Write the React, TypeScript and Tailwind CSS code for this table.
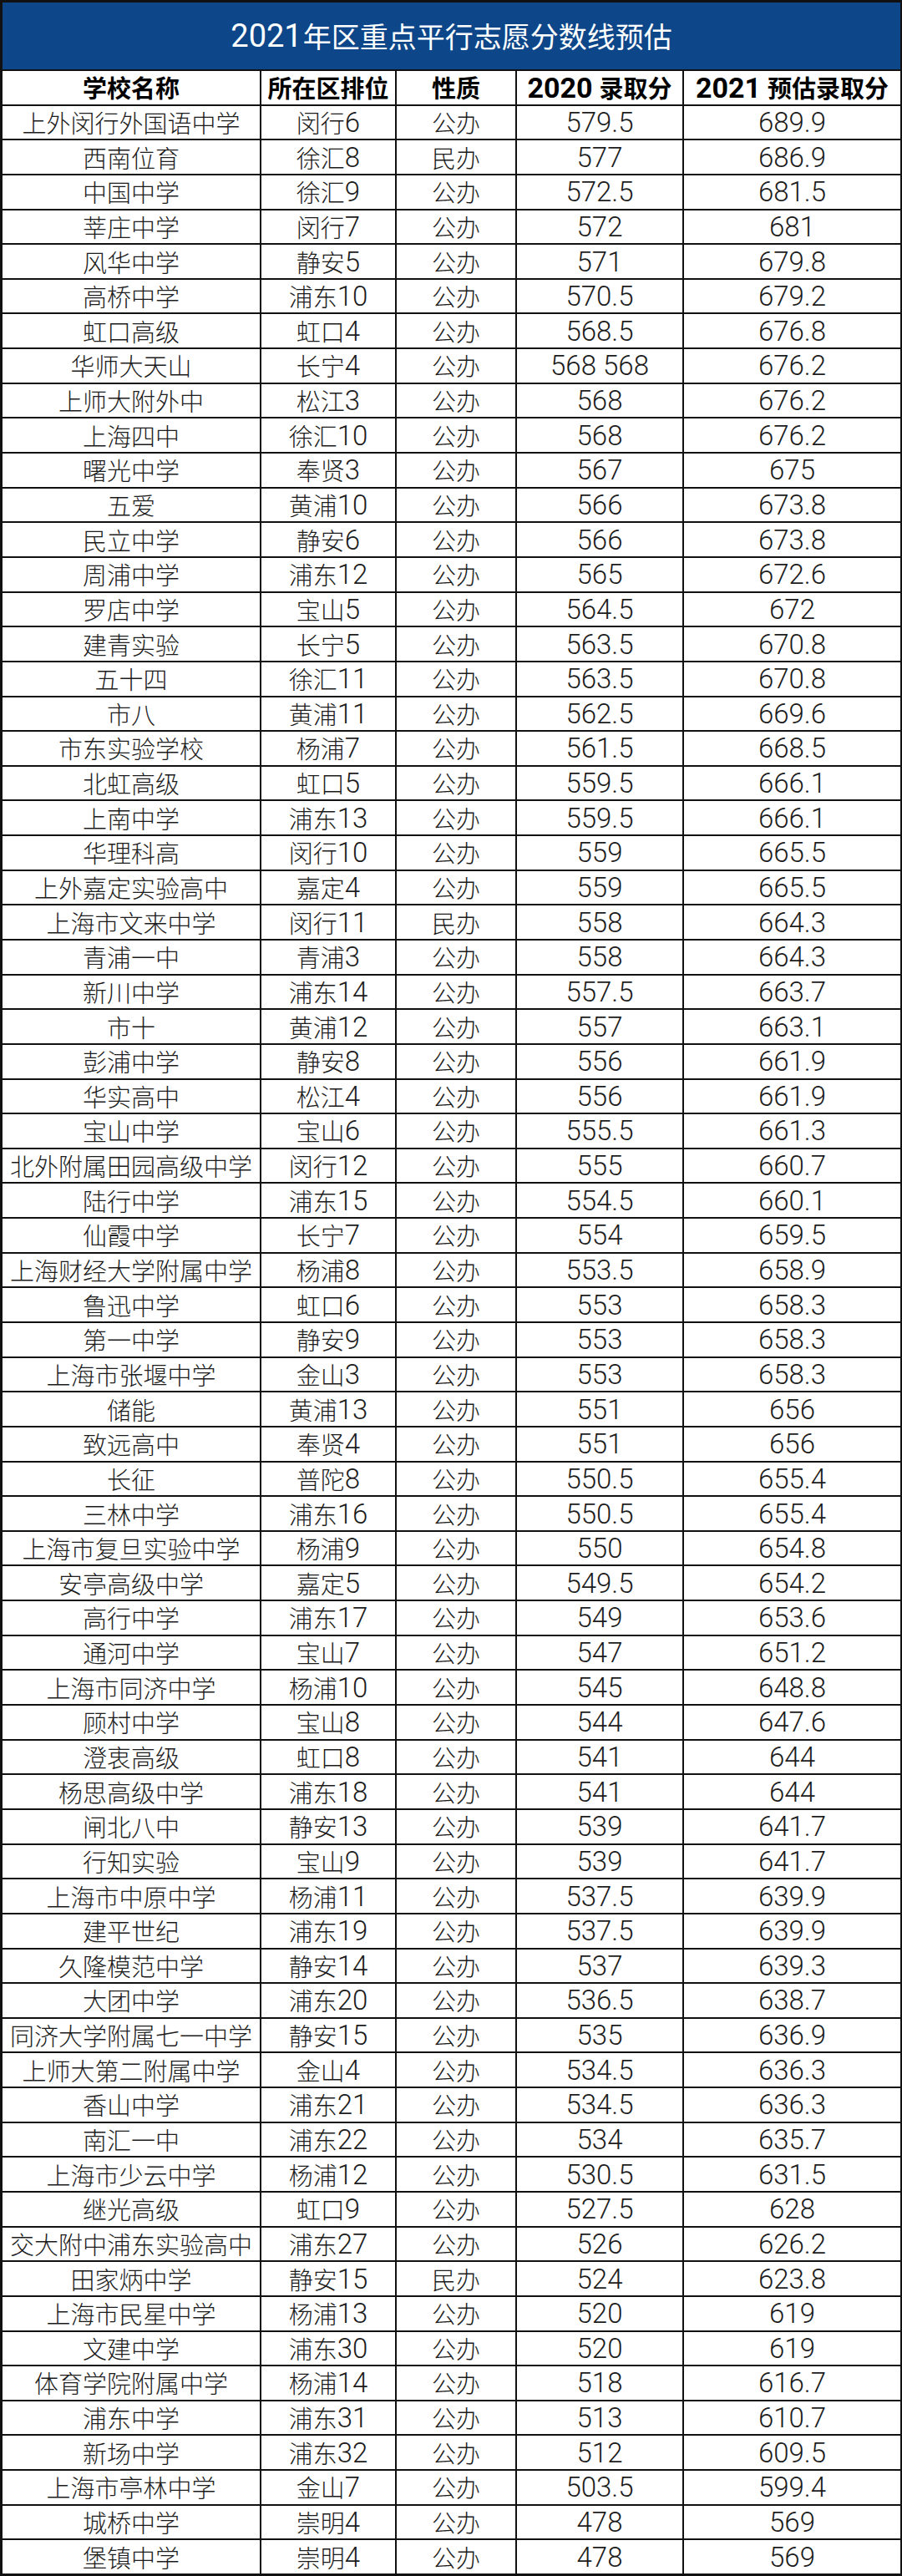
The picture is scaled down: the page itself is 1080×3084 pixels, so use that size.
import React from "react";

const rows: [string, string, string, string, string][] = [
  ["上外闵行外国语中学", "闵行6", "公办", "579.5", "689.9"],
  ["西南位育", "徐汇8", "民办", "577", "686.9"],
  ["中国中学", "徐汇9", "公办", "572.5", "681.5"],
  ["莘庄中学", "闵行7", "公办", "572", "681"],
  ["风华中学", "静安5", "公办", "571", "679.8"],
  ["高桥中学", "浦东10", "公办", "570.5", "679.2"],
  ["虹口高级", "虹口4", "公办", "568.5", "676.8"],
  ["华师大天山", "长宁4", "公办", "568 568", "676.2"],
  ["上师大附外中", "松江3", "公办", "568", "676.2"],
  ["上海四中", "徐汇10", "公办", "568", "676.2"],
  ["曙光中学", "奉贤3", "公办", "567", "675"],
  ["五爱", "黄浦10", "公办", "566", "673.8"],
  ["民立中学", "静安6", "公办", "566", "673.8"],
  ["周浦中学", "浦东12", "公办", "565", "672.6"],
  ["罗店中学", "宝山5", "公办", "564.5", "672"],
  ["建青实验", "长宁5", "公办", "563.5", "670.8"],
  ["五十四", "徐汇11", "公办", "563.5", "670.8"],
  ["市八", "黄浦11", "公办", "562.5", "669.6"],
  ["市东实验学校", "杨浦7", "公办", "561.5", "668.5"],
  ["北虹高级", "虹口5", "公办", "559.5", "666.1"],
  ["上南中学", "浦东13", "公办", "559.5", "666.1"],
  ["华理科高", "闵行10", "公办", "559", "665.5"],
  ["上外嘉定实验高中", "嘉定4", "公办", "559", "665.5"],
  ["上海市文来中学", "闵行11", "民办", "558", "664.3"],
  ["青浦一中", "青浦3", "公办", "558", "664.3"],
  ["新川中学", "浦东14", "公办", "557.5", "663.7"],
  ["市十", "黄浦12", "公办", "557", "663.1"],
  ["彭浦中学", "静安8", "公办", "556", "661.9"],
  ["华实高中", "松江4", "公办", "556", "661.9"],
  ["宝山中学", "宝山6", "公办", "555.5", "661.3"],
  ["北外附属田园高级中学", "闵行12", "公办", "555", "660.7"],
  ["陆行中学", "浦东15", "公办", "554.5", "660.1"],
  ["仙霞中学", "长宁7", "公办", "554", "659.5"],
  ["上海财经大学附属中学", "杨浦8", "公办", "553.5", "658.9"],
  ["鲁迅中学", "虹口6", "公办", "553", "658.3"],
  ["第一中学", "静安9", "公办", "553", "658.3"],
  ["上海市张堰中学", "金山3", "公办", "553", "658.3"],
  ["储能", "黄浦13", "公办", "551", "656"],
  ["致远高中", "奉贤4", "公办", "551", "656"],
  ["长征", "普陀8", "公办", "550.5", "655.4"],
  ["三林中学", "浦东16", "公办", "550.5", "655.4"],
  ["上海市复旦实验中学", "杨浦9", "公办", "550", "654.8"],
  ["安亭高级中学", "嘉定5", "公办", "549.5", "654.2"],
  ["高行中学", "浦东17", "公办", "549", "653.6"],
  ["通河中学", "宝山7", "公办", "547", "651.2"],
  ["上海市同济中学", "杨浦10", "公办", "545", "648.8"],
  ["顾村中学", "宝山8", "公办", "544", "647.6"],
  ["澄衷高级", "虹口8", "公办", "541", "644"],
  ["杨思高级中学", "浦东18", "公办", "541", "644"],
  ["闸北八中", "静安13", "公办", "539", "641.7"],
  ["行知实验", "宝山9", "公办", "539", "641.7"],
  ["上海市中原中学", "杨浦11", "公办", "537.5", "639.9"],
  ["建平世纪", "浦东19", "公办", "537.5", "639.9"],
  ["久隆模范中学", "静安14", "公办", "537", "639.3"],
  ["大团中学", "浦东20", "公办", "536.5", "638.7"],
  ["同济大学附属七一中学", "静安15", "公办", "535", "636.9"],
  ["上师大第二附属中学", "金山4", "公办", "534.5", "636.3"],
  ["香山中学", "浦东21", "公办", "534.5", "636.3"],
  ["南汇一中", "浦东22", "公办", "534", "635.7"],
  ["上海市少云中学", "杨浦12", "公办", "530.5", "631.5"],
  ["继光高级", "虹口9", "公办", "527.5", "628"],
  ["交大附中浦东实验高中", "浦东27", "公办", "526", "626.2"],
  ["田家炳中学", "静安15", "民办", "524", "623.8"],
  ["上海市民星中学", "杨浦13", "公办", "520", "619"],
  ["文建中学", "浦东30", "公办", "520", "619"],
  ["体育学院附属中学", "杨浦14", "公办", "518", "616.7"],
  ["浦东中学", "浦东31", "公办", "513", "610.7"],
  ["新场中学", "浦东32", "公办", "512", "609.5"],
  ["上海市亭林中学", "金山7", "公办", "503.5", "599.4"],
  ["城桥中学", "崇明4", "公办", "478", "569"],
  ["堡镇中学", "崇明4", "公办", "478", "569"],
];

function Mixed({ text }: { text: string }) {
  const parts = text.split(/([0-9.]+(?: [0-9.]+)*)/).filter((p) => p.length > 0);
  return (
    <>
      {parts.map((p, i) =>
        /^[0-9.]/.test(p) ? (
          <span
            key={i}
            className="font-['Roboto',sans-serif] font-light text-[33px] leading-none"
          >
            {p}
          </span>
        ) : (
          <span key={i}>{p}</span>
        )
      )}
    </>
  );
}

export default function App() {
  return (
    <div className="w-[1080px] h-[3084px] bg-[#111] pt-[3px] pl-[3px] pr-[2px] pb-[3px] flex flex-col gap-[2px] font-['Noto_Sans_CJK_SC',sans-serif]">
      <div className="h-[80px] shrink-0 bg-[#0d4789] flex items-center justify-center text-white text-[34px] leading-none">
        <span className="font-['Roboto',sans-serif] text-[38px] mr-[1px]">2021</span>
        <span>年区重点平行志愿分数线预估</span>
      </div>
      <div className="flex-1 grid grid-cols-[308px_160px_142px_198px_259px] grid-rows-[repeat(72,minmax(0,1fr))] gap-[2px]">
        <div className="bg-white flex items-center justify-center text-[29px] font-bold text-black leading-none whitespace-nowrap">
          学校名称
        </div>
        <div className="bg-white flex items-center justify-center text-[29px] font-bold text-black leading-none whitespace-nowrap">
          所在区排位
        </div>
        <div className="bg-white flex items-center justify-center text-[29px] font-bold text-black leading-none whitespace-nowrap">
          性质
        </div>
        <div className="bg-white flex items-center justify-center text-[29px] font-bold text-black leading-none whitespace-nowrap">
          <span className="font-['Roboto',sans-serif] font-bold text-[34px] mr-[8px]">2020</span>
          <span>录取分</span>
        </div>
        <div className="bg-white flex items-center justify-center text-[29px] font-bold text-black leading-none whitespace-nowrap">
          <span className="font-['Roboto',sans-serif] font-bold text-[34px] mr-[8px]">2021</span>
          <span>预估录取分</span>
        </div>
        {rows.map((r, ri) =>
          r.map((c, ci) => (
            <div
              key={ri + "-" + ci}
              className="bg-white flex items-center justify-center text-[29px] font-light text-[#1c1c1c] leading-none whitespace-nowrap overflow-visible"
            >
              <Mixed text={c} />
            </div>
          ))
        )}
      </div>
    </div>
  );
}
